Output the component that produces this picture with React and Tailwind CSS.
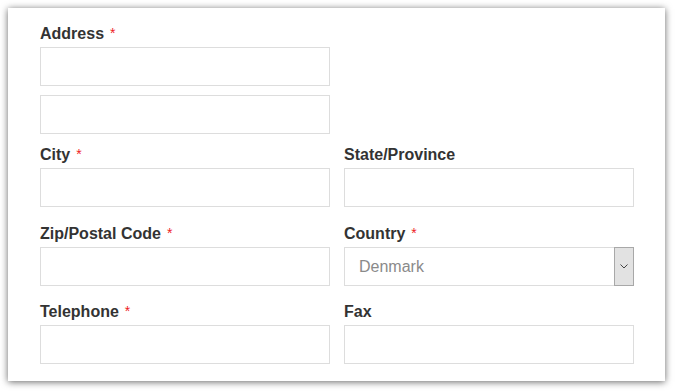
import React from "react";

const Label = ({ children, req }) => (
  <div className="h-5 leading-5 text-[16px] font-bold text-[#333] mb-[3px]">
    {children}
    {req && <span className="text-[#ee1c25] text-[14px] font-normal ml-[6px] relative -top-[1px]">*</span>}
  </div>
);

const Input = () => (
  <div className="h-[39px] border border-[#dddddd] bg-white" />
);

export default function App() {
  return (
    <div className="w-[675px] h-[391px] bg-white pt-[8px] pl-[8px]" style={{ fontFamily: '"Liberation Sans", Arial, sans-serif' }}>
      <div className="w-[657px] h-[373px] bg-white shadow-[0px_1px_7px_rgba(0,0,0,0.6)] pl-[32px] pr-[31px] pt-[16px]">
        <div className="grid grid-cols-2 gap-x-[14px]">
          <div className="col-span-1">
            <Label req>Address</Label>
            <Input />
            <div className="h-[9px]" />
            <Input />
          </div>
          <div />
        </div>
        <div className="grid grid-cols-2 gap-x-[14px] mt-[11px]">
          <div>
            <Label req>City</Label>
            <Input />
          </div>
          <div>
            <Label>State/Province</Label>
            <Input />
          </div>
        </div>
        <div className="grid grid-cols-2 gap-x-[14px] mt-[17px]">
          <div>
            <Label req>Zip/Postal Code</Label>
            <Input />
          </div>
          <div>
            <Label req>Country</Label>
            <div className="h-[39px] border border-[#dddddd] bg-white flex items-center justify-between">
              <span className="pl-[14px] text-[16px] text-[#8a8a8a]">Denmark</span>
              <div className="w-[20px] h-[39px] -my-px -mr-px bg-[#e2e2e2] border border-[#a8a8a8] flex items-center justify-center">
                <svg width="8" height="5" viewBox="0 0 8 5"><path d="M0.5 0.5l3.5 3.5L7.5 0.5" fill="none" stroke="#444" strokeWidth="1" /></svg>
              </div>
            </div>
          </div>
        </div>
        <div className="grid grid-cols-2 gap-x-[14px] mt-[16px]">
          <div>
            <Label req>Telephone</Label>
            <Input />
          </div>
          <div>
            <Label>Fax</Label>
            <Input />
          </div>
        </div>
      </div>
    </div>
  );
}
